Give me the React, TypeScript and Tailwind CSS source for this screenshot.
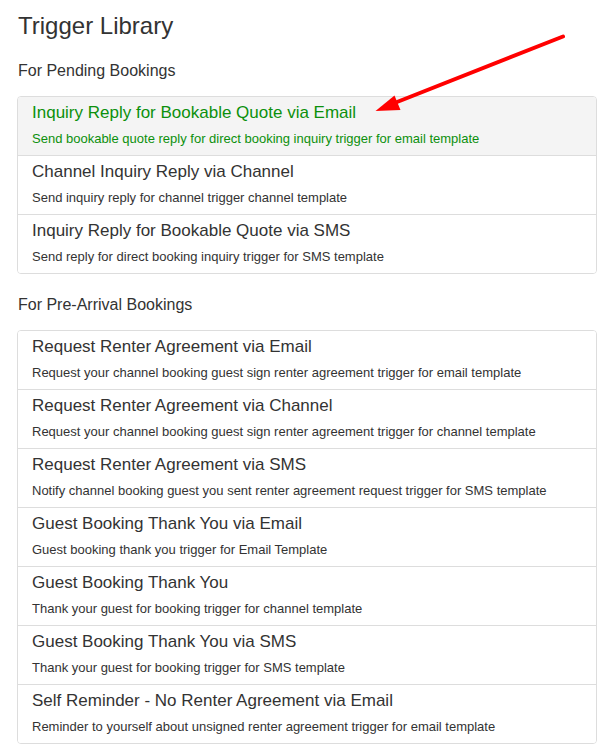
import React from "react";

type Item = { title: string; desc: string; active?: boolean };

const pending: Item[] = [
  {
    title: "Inquiry Reply for Bookable Quote via Email",
    desc: "Send bookable quote reply for direct booking inquiry trigger for email template",
    active: true,
  },
  {
    title: "Channel Inquiry Reply via Channel",
    desc: "Send inquiry reply for channel trigger channel template",
  },
  {
    title: "Inquiry Reply for Bookable Quote via SMS",
    desc: "Send reply for direct booking inquiry trigger for SMS template",
  },
];

const preArrival: Item[] = [
  {
    title: "Request Renter Agreement via Email",
    desc: "Request your channel booking guest sign renter agreement trigger for email template",
  },
  {
    title: "Request Renter Agreement via Channel",
    desc: "Request your channel booking guest sign renter agreement trigger for channel template",
  },
  {
    title: "Request Renter Agreement via SMS",
    desc: "Notify channel booking guest you sent renter agreement request trigger for SMS template",
  },
  {
    title: "Guest Booking Thank You via Email",
    desc: "Guest booking thank you trigger for Email Template",
  },
  {
    title: "Guest Booking Thank You",
    desc: "Thank your guest for booking trigger for channel template",
  },
  {
    title: "Guest Booking Thank You via SMS",
    desc: "Thank your guest for booking trigger for SMS template",
  },
  {
    title: "Self Reminder - No Renter Agreement via Email",
    desc: "Reminder to yourself about unsigned renter agreement trigger for email template",
  },
];

function List({ items }: { items: Item[] }) {
  return (
    <div className="border border-[#dddddd] rounded-[4px] overflow-hidden">
      {items.map((it, i) => (
        <div
          key={i}
          className={
            (i > 0 ? "border-t border-[#dddddd] " : "") +
            (it.active ? "bg-[#f4f4f4] text-[#0c900c] " : "bg-white text-[#333333] ") +
            "px-[14px] pt-[6px] pb-[7px]"
          }
        >
          <div className="text-[17px] leading-[19px]">{it.title}</div>
          <div className="text-[13px] leading-[18px] mt-[8px]">{it.desc}</div>
        </div>
      ))}
    </div>
  );
}

export default function App() {
  return (
    <div
      className="relative bg-white min-h-[745px] pl-[17px] pr-[18px] pt-[12px] text-[#333333]"
      style={{ fontFamily: '"Liberation Sans", Arial, sans-serif' }}
    >
      <h1 className="text-[24px] leading-[27px] font-normal pl-[1px]">Trigger Library</h1>
      <div className="mt-[23px]">
        <h2 className="text-[16px] leading-[18px] font-normal mb-[16px] pl-[1px]">For Pending Bookings</h2>
        <List items={pending} />
      </div>
      <div className="mt-[22px]">
        <h2 className="text-[16px] leading-[18px] font-normal mb-[16px] pl-[1px]">For Pre-Arrival Bookings</h2>
        <List items={preArrival} />
      </div>
      <svg
        className="absolute left-0 top-0 pointer-events-none"
        width="615"
        height="745"
        viewBox="0 0 615 745"
      >
        <line x1="563" y1="36.5" x2="392" y2="104" stroke="#ff0000" strokeWidth="4" strokeLinecap="round" />
        <polygon points="375.5,111 394.5,95.5 400.5,110" fill="#ff0000" />
      </svg>
    </div>
  );
}
